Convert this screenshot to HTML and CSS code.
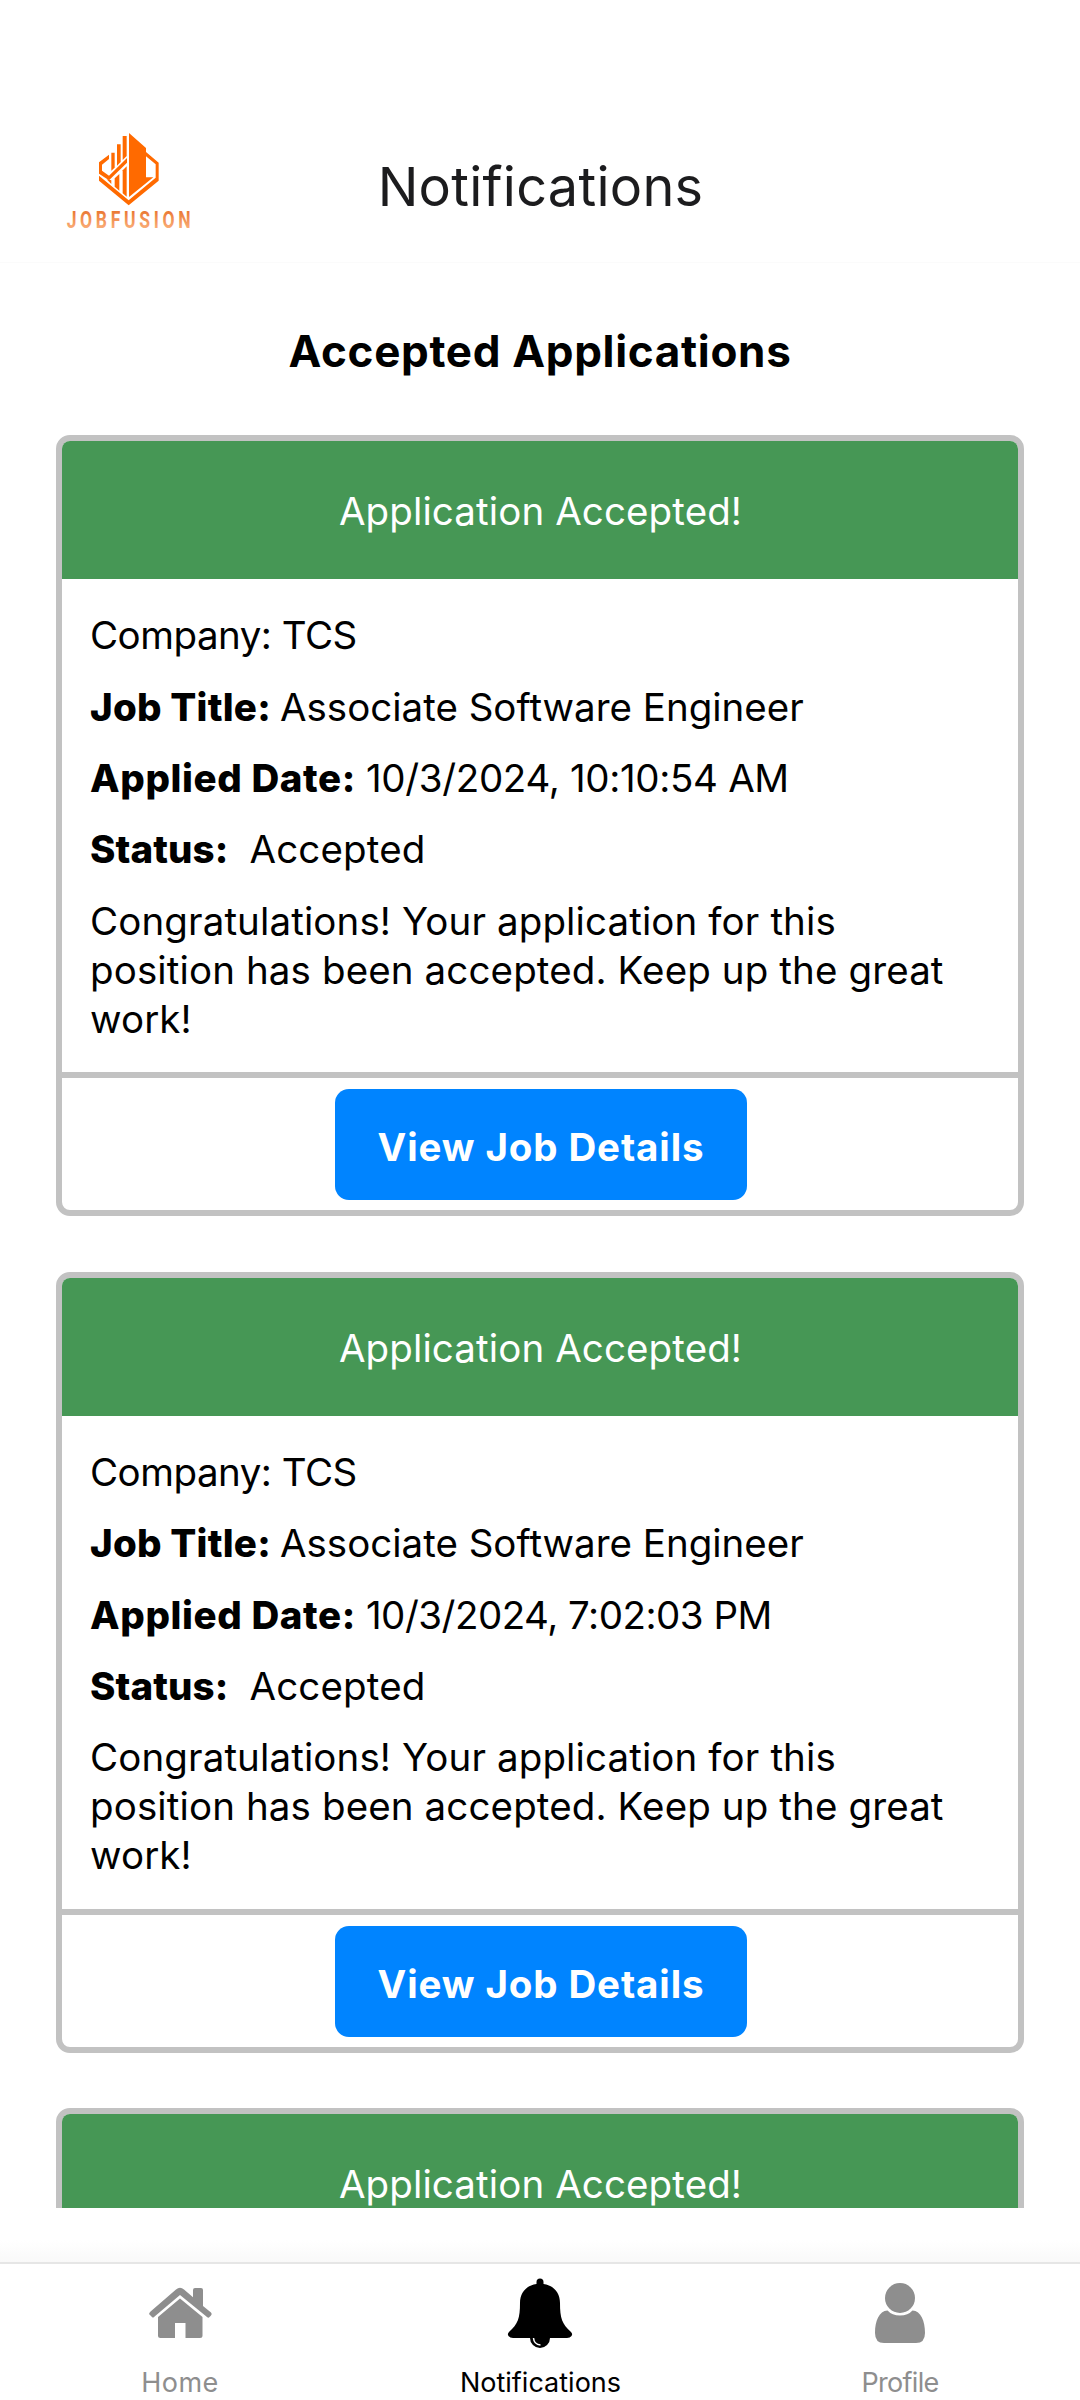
FILE: index.html
```html
<!DOCTYPE html>
<html lang="en">
<head>
<meta charset="utf-8">
<title>Notifications</title>
<link rel="stylesheet" href="styles.css">
</head>
<body>
<div class="screen">
  <header class="header">
    <svg class="logo" viewBox="0 0 480 360" role="img" aria-label="JobFusion">
      <defs>
        <linearGradient id="word" x1="0" y1="0" x2="0" y2="1">
          <stop offset="0.15" stop-color="#e8722c"/>
          <stop offset="1" stop-color="#ffbd8c"/>
        </linearGradient>
      </defs>
      <g fill="#ff6a00">
        <path d="M237 39L288 84V172H310L237 231Z"/>
        <path d="M288 96L326 128V182L236 256L147 182V167L236 241L317 173V133L288 109Z"/>
        <path d="M147 178V127L177 104V117L156 134V152L177 167L231 114V128L177 181L147 161Z"/>
        <path d="M184 98H194V143L184 152Z"/>
        <path d="M201 73H212V126L201 137Z"/>
        <path d="M218 48H230V108L218 120Z"/>
        <path d="M194 175L208 162V212L194 200Z"/>
        <path d="M218 151L230 139V230L218 220Z"/>
        <path d="M170 178L184 181V192Z"/>
      </g>
      <text class="logo-word" transform="translate(50 323) scale(0.72 1)" textLength="516" lengthAdjust="spacing" fill="url(#word)">JOBFUSION</text>
    </svg>
    <h1 class="header-title">Notifications</h1>
  </header>

  <main class="content">
    <h2 class="section-title">Accepted Applications</h2>

    <article class="card">
      <div class="card-head">Application Accepted!</div>
      <div class="card-body">
        <p class="company">Company: TCS</p>
        <p><b class="label label-title">Job Title:</b>Associate Software Engineer</p>
        <p><b class="label label-date">Applied Date:</b><span class="date-am">10/3/2024, 10:10:54 AM</span></p>
        <p><b class="label label-status">Status:</b><span class="status">Accepted</span></p>
        <p class="message">Congratulations! Your application for this position has been accepted. Keep up the great work!</p>
      </div>
      <div class="card-foot"><button class="button">View Job Details</button></div>
    </article>

    <article class="card">
      <div class="card-head">Application Accepted!</div>
      <div class="card-body">
        <p class="company">Company: TCS</p>
        <p><b class="label label-title">Job Title:</b>Associate Software Engineer</p>
        <p><b class="label label-date">Applied Date:</b><span class="date-pm">10/3/2024, 7:02:03 PM</span></p>
        <p><b class="label label-status">Status:</b><span class="status">Accepted</span></p>
        <p class="message">Congratulations! Your application for this position has been accepted. Keep up the great work!</p>
      </div>
      <div class="card-foot"><button class="button">View Job Details</button></div>
    </article>

    <article class="card">
      <div class="card-head">Application Accepted!</div>
    </article>
  </main>

  <div class="fade"></div>
  <nav class="tabs">
    <a class="tab">
      <svg class="icon" viewBox="0 0 80 70" fill="currentColor">
        <path d="M9 36L10 34L36 11.500Q40 8 44 11.500L53 19.300V12Q53 10 55 10H61Q63 10 63 12V28L71 34.500Q72.500 36 71 37.500L69 39.500Q68 40 67 39L40 17L14 39Q13 40 12 39Z"/>
        <path d="M40 20.500L62.500 39V57.500Q62.500 60 60 60H45.500V45H35V60H20.500Q18 60 18 57.500V39Z"/>
      </svg>
      <span class="tab-home">Home</span>
    </a>
    <a class="tab tab-active">
      <svg class="icon" viewBox="0 0 80 70" fill="currentColor">
        <path d="M36.500 6V4Q36.500 0.500 40 0.500T43.500 4V6C54 7.500 60 15 60 25C60 40 62 46 71 54Q73 56 71.500 58Q70 60 67 60H50A10 10 0 0 1 30 60H13Q10 60 8.500 58Q7 56 9 54C18 46 20 40 20 25C20 15 26 7.500 36.500 6Z"/>
        <path d="M33.500 60Q34 66.500 40.500 67" fill="none" stroke="#fff" stroke-width="1.500"/>
      </svg>
      <span class="tab-notifications">Notifications</span>
    </a>
    <a class="tab">
      <svg class="icon" viewBox="0 0 80 70" fill="currentColor">
        <circle cx="40" cy="20" r="15"/>
        <path d="M27.500 32.500Q32 37.500 40 37.500T52.500 32.500C61 33 65 43 65 55Q65 65 56 65H24Q15 65 15 55C15 43 19 33 27.500 32.500Z"/>
      </svg>
      <span class="tab-profile">Profile</span>
    </a>
  </nav>
</div>
</body>
</html>
```
FILE: styles.css
```css
* { box-sizing: border-box; }

body {
  margin: 0;
  background: #fff;
  color: #000;
  font-family: Inter, "Open Sans", sans-serif;
  font-size: 38.5px;
  line-height: 49px;
}

h1, h2, p { margin: 0; }

.screen {
  display: flex;
  flex-direction: column;
  width: 1080px;
  height: 2400px;
  overflow: hidden;
}

.header {
  display: grid;
  grid-template-columns: 160px 1fr 160px;
  align-items: start;
  flex: none;
  height: 262px;
  padding: 120px 50px 0;
}

.logo { width: 160px; height: 120px; }

.logo-word {
  font-family: Roboto, sans-serif;
  font-size: 73px;
  font-weight: 700;
}

.header-title {
  padding: 33px 0 0 1px;
  color: #1c1c1e;
  font-size: 54px;
  font-weight: 400;
  letter-spacing: 0.28px;
  line-height: 68px;
  text-align: center;
  font-variant-ligatures: none;
}

.content {
  flex: none;
  height: 1946px;
  padding: 60px 56px 0;
  overflow: hidden;
  border-top: 1px solid #fbfbfb;
}

.section-title {
  margin-bottom: 56px;
  font-size: 44px;
  font-weight: 700;
  letter-spacing: 0.68px;
  line-height: 56px;
  text-align: center;
}

.card {
  margin-bottom: 55.5px;
  overflow: hidden;
  border: 6px solid #c2c2c2;
  border-radius: 14px;
}

.card-head {
  height: 138px;
  padding: 46px 0 0 1px;
  background: #469755;
  color: #fff;
  letter-spacing: 0.11px;
  text-align: center;
}

.card-body {
  display: flex;
  flex-direction: column;
  gap: 22.4px;
  height: 493px;
  padding: 32.3px 28px 0;
}

.company { letter-spacing: -0.5px; }

.label { font-weight: 800; }
.label-title { margin-right: 9px; letter-spacing: 0.2px; }
.label-date { margin-right: 10px; letter-spacing: 0.6px; }
.label-status { margin-right: 21px; letter-spacing: 0.1px; }

.date-am { letter-spacing: -0.33px; }
.date-pm { letter-spacing: -0.5px; }
.status { letter-spacing: 0.15px; }
.message { letter-spacing: 0.12px; }

.card-foot {
  display: flex;
  justify-content: center;
  height: 138px;
  padding: 11px 0 0 2px;
  border-top: 6px solid #c2c2c2;
}

.button {
  width: 412px;
  height: 111px;
  padding: 6px 0 0;
  border: 0;
  border-radius: 14px;
  background: #0084ff;
  color: #fff;
  font: 700 38.5px/49px Inter, sans-serif;
  letter-spacing: 0.88px;
}

.fade {
  flex: none;
  height: 54px;
  background: linear-gradient(#fff 60%, #f9f9f9);
}

.tabs {
  display: grid;
  grid-template-columns: repeat(3, 1fr);
  flex: 1;
  border-top: 2px solid #e6e6e6;
}

.tab {
  display: flex;
  flex-direction: column;
  align-items: center;
  gap: 18px;
  padding-top: 14px;
  color: #8e8e8e;
  font-size: 27px;
  line-height: 33px;
}

.tab-active { color: #000; }
.icon { width: 80px; height: 70px; }
.tab-home { letter-spacing: 0.5px; }
.tab-notifications { padding-left: 1px; letter-spacing: 0; }
.tab-profile { letter-spacing: -0.7px; }
```
